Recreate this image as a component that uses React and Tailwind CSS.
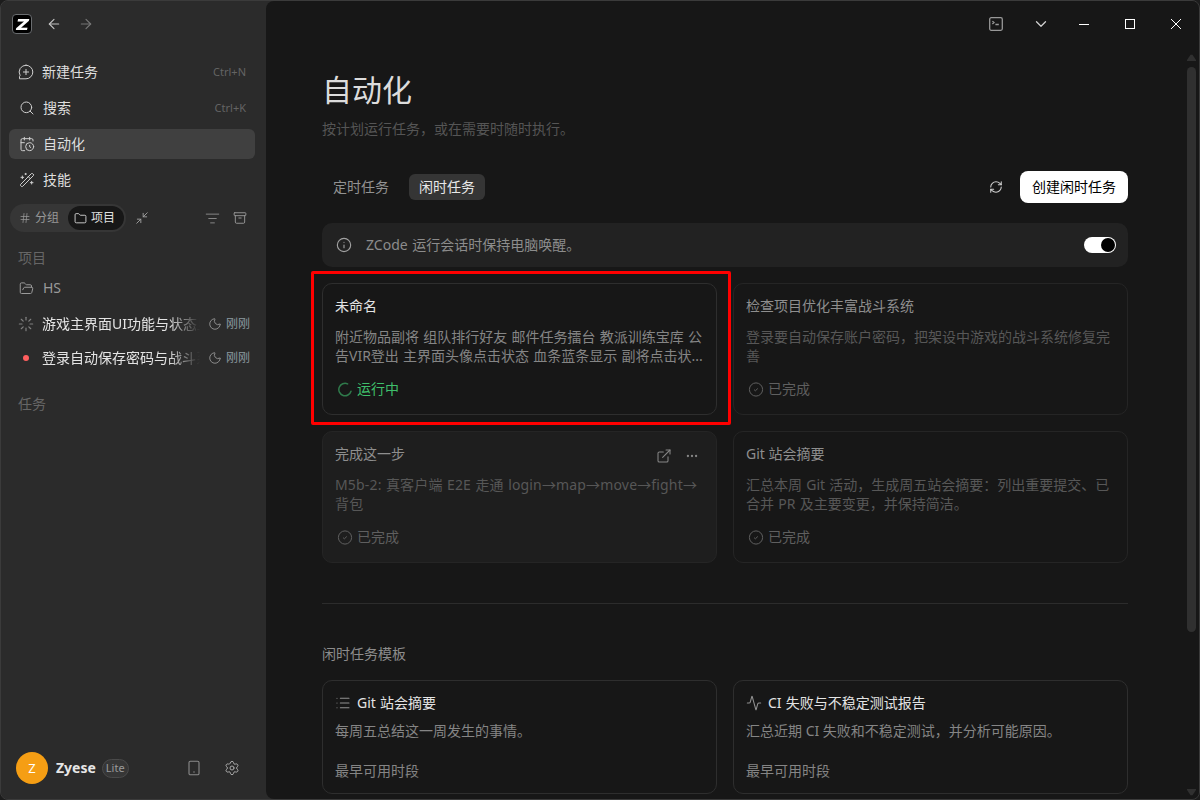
import React, { useState } from 'react';
import {
    Activity,
    Archive,
    ArrowLeft,
    ArrowRight,
    CalendarClock,
    ChevronDown,
    Ellipsis,
    ExternalLink,
    Folder,
    FolderOpen,
    Hash,
    Info,
    List,
    ListFilter,
    Loader,
    Minimize2,
    Moon,
    RefreshCw,
    Search,
    Settings,
    WandSparkles
} from 'lucide-react';

const NewChatIcon = () => (
    <svg width="16" height="16" viewBox="0 0 16 16" fill="none" stroke="currentColor" strokeWidth="1" strokeLinecap="round" strokeLinejoin="round" className="shrink-0 text-[#cfcfcf]">
        <path d="M8 1.2a6.8 6.8 0 1 1 0 13.6H1.5v-2.4l.6-1A6.8 6.8 0 0 1 8 1.2z" />
        <path d="M8 5.4v5.2M5.4 8h5.2" />
    </svg>
);

const TerminalIcon = () => (
    <svg width="14" height="14" viewBox="0 0 14 14" fill="none" stroke="currentColor" strokeWidth="1.3">
        <rect x="0.7" y="0.7" width="12.6" height="12.6" rx="1.5" />
        <path d="M3.4 4.2l1.6 1.4-1.6 1.4M6.4 7.5h3.4" />
    </svg>
);

const DoneIcon = () => (
    <svg width="16" height="16" viewBox="0 0 16 16" fill="none" stroke="currentColor" strokeWidth="1">
        <circle cx="8" cy="8.5" r="6.6" />
        <path d="M6.1 8.7l1.3 1.1 2.4-2.3" />
    </svg>
);

const RunningIcon = () => (
    <svg width="16" height="16" viewBox="0 0 16 16" fill="none" stroke="currentColor" strokeWidth="1.5" strokeLinecap="round" className="text-[#2f7a4b]">
        <path d="M14 10.2A6.2 6.2 0 1 1 10.6 2.9" />
    </svg>
);

const PhoneIcon = () => (
    <svg width="12" height="16" viewBox="0 0 12 16" fill="none" stroke="currentColor" strokeWidth="1.1">
        <rect x="1" y="1.2" width="10" height="13.6" rx="1.4" />
        <path d="M5.2 12h1.6" />
    </svg>
);

const navItems = [
    { label: '新建任务', icon: NewChatIcon, shortcut: 'Ctrl+N', pad: 'pl-[9px]' },
    { label: '搜索', icon: Search, shortcut: 'Ctrl+K', pad: 'pl-2.5' },
    { label: '自动化', icon: CalendarClock, pad: 'pl-2.5' },
    { label: '技能', icon: WandSparkles, pad: 'pl-2.5' }
];

const sessions = [
    { title: '游戏主界面UI功能与状态显', running: true },
    { title: '登录自动保存密码与战斗系', running: false }
];

const tasks = [
    {
        title: '未命名',
        text: '附近物品副将 组队排行好友 邮件任务擂台 教派训练宝库 公告VIR登出 主界面头像点击状态 血条蓝条显示 副将点击状...',
        running: true
    },
    { title: '检查项目优化丰富战斗系统', text: '登录要自动保存账户密码，把架设中游戏的战斗系统修复完善' },
    { title: '完成这一步', text: 'M5b-2: 真客户端 E2E 走通 login→map→move→fight→背包', hovered: true },
    { title: 'Git 站会摘要', text: '汇总本周 Git 活动，生成周五站会摘要：列出重要提交、已合并 PR 及主要变更，并保持简洁。' }
];

const templates = [
    { title: 'Git 站会摘要', text: '每周五总结这一周发生的事情。', icon: List },
    { title: 'CI 失败与不稳定测试报告', text: '汇总近期 CI 失败和不稳定测试，并分析可能原因。', icon: Activity }
];

const Sidebar = () => (
    <aside className="flex w-[265px] shrink-0 flex-col bg-[#2b2b2b] pl-2">
        <div className="mt-[13px] flex h-5 items-center pl-[3px]">
            <div className="flex size-5 items-center justify-center overflow-hidden rounded border border-[#6a6d70] bg-black">
                <span className="scale-x-125 font-['Inter'] text-[15px] leading-none font-black text-white italic">Z</span>
            </div>
            <ArrowLeft size={16} strokeWidth={1.7} className="ml-[14px] text-[#c4c4c4]" />
            <ArrowRight size={16} strokeWidth={1.7} className="ml-4 text-[#777777]" />
        </div>

        <nav className="mt-[23px] flex w-[246px] flex-col gap-1.5">
            {navItems.map((item) => {
                const Icon = item.icon;
                return (
                    <div
                        key={item.label}
                        className={`flex h-[30px] items-center rounded-md pr-[9px] ${item.pad} ${item.label === '自动化' ? 'bg-[#404040]' : ''}`}
                    >
                        <Icon size={16} strokeWidth={1.5} className="shrink-0 text-[#cfcfcf]" />
                        <span className="ml-2 text-[#dedede]">{item.label}</span>
                        {item.shortcut && <span className="ml-auto text-[11px] text-[#646464]">{item.shortcut}</span>}
                    </div>
                );
            })}
        </nav>

        <div className="mt-[9px] flex h-7 w-[246px] items-center pl-px">
            <div className="flex h-7 items-center rounded-full bg-[#363636] p-0.5 text-xs">
                <div className="flex h-6 items-center gap-1 pr-[9px] pl-[7px] text-[#989898]">
                    <Hash size={12} strokeWidth={1.5} />
                    <span>分组</span>
                </div>
                <div className="flex h-6 items-center gap-1 rounded-full bg-[#171717] pr-[9px] pl-1.5 text-[#e0e0e0]">
                    <Folder size={13} strokeWidth={1.6} />
                    <span>项目</span>
                </div>
            </div>
            <Minimize2 size={14} strokeWidth={1.6} className="ml-[9px] text-[#a0a0a0]" />
            <ListFilter size={15} strokeWidth={1.6} className="ml-auto text-[#858585]" />
            <Archive size={14} strokeWidth={1.6} className="mr-2 ml-[13px] text-[#9a9a9a]" />
        </div>

        <div className="mt-4 pl-[9px] text-[#666666]">项目</div>
        <div className="mt-2.5 flex h-5 items-center pl-2.5 text-[#9a9a9a]">
            <FolderOpen size={15} strokeWidth={1.6} />
            <span className="ml-[9px]">HS</span>
        </div>
        <div className="mt-[9px] w-[246px]">
            {sessions.map((session) => (
                <div key={session.title} className="flex h-[34px] items-center pl-[9px]">
                    <div className="flex size-4 items-center justify-center">
                        {session.running ? (
                            <Loader size={16} strokeWidth={1.8} className="text-[#808080]" />
                        ) : (
                            <span className="size-1.5 rounded-full bg-[#ff5f5f]" />
                        )}
                    </div>
                    <div className="ml-2 w-[158px] overflow-hidden mask-r-from-80% whitespace-nowrap text-[#e4e4e4]">{session.title}</div>
                    <Moon size={14} strokeWidth={1.6} className="ml-2 shrink-0 text-[#929292]" />
                    <span className="ml-1 shrink-0 text-xs text-[#8c9aa0]">刚刚</span>
                </div>
            ))}
        </div>
        <div className="mt-[19px] pl-[9px] text-[#666666]">任务</div>

        <div className="mt-auto mb-[15px] flex h-8 items-center pl-[7px]">
            <div className="flex size-8 items-center justify-center rounded-full bg-[#f59e14] text-[13px] text-white">Z</div>
            <span className="ml-2 font-bold text-[#e6e6e6]">Zyese</span>
            <span className="ml-1.5 flex h-[19px] items-center rounded-full border border-[#4a4a4a] bg-[#363636] px-[3px] text-[11px] text-[#9a9a9a]">Lite</span>
            <span className="ml-auto text-[#8a8a8a]"><PhoneIcon /></span>
            <Settings size={16} strokeWidth={1.5} className="mr-[26px] ml-6 text-[#a8a8a8]" />
        </div>
    </aside>
);

const WindowBar = () => (
    <header className="flex h-[46px] shrink-0 items-center justify-end pr-[17px] text-white">
        <span className="text-[#989898]"><TerminalIcon /></span>
        <ChevronDown size={18} strokeWidth={1.7} className="ml-[29px] text-[#d0d0d0]" />
        <span className="ml-[29px] h-px w-2.5 bg-white" />
        <span className="ml-9 size-2.5 border border-white" />
        <svg width="12" height="12" viewBox="0 0 12 12" stroke="currentColor" strokeWidth="1" className="ml-[35px]">
            <path d="M1 1l10 10M11 1L1 11" />
        </svg>
    </header>
);

const TaskCard = ({ task }) => {
    const tone = task.running
        ? { card: 'border-[#2e2e2e]', title: 'text-[#e4e4e4]', text: 'text-[#858585]' }
        : { card: 'border-[#252525]', title: 'text-[#8e8e8e]', text: 'text-[#575757]' };

    return (
        <div className={`h-[132px] rounded-[10px] border px-3 pt-3 ${tone.card} ${task.hovered ? 'bg-[#1e1e1e] tracking-[0.16px]' : ''}`}>
            <div className="flex h-5 items-center">
                <span className={`tracking-normal ${tone.title}`}>{task.title}</span>
                {task.hovered && (
                    <div className="mt-1 mr-[5px] ml-auto flex items-center gap-[13px] text-[#858585]">
                        <ExternalLink size={16} strokeWidth={1.6} />
                        <Ellipsis size={14} strokeWidth={2} />
                    </div>
                )}
            </div>
            <p className={`mt-[11px] line-clamp-2 h-[39px] leading-[19.25px] [word-spacing:0.6px] ${tone.text}`}>{task.text}</p>
            <div className={`mt-[13px] flex h-5 items-center gap-1 pl-0.5 tracking-normal ${task.running ? 'text-[#3fbf6b]' : 'text-[#5f5f5f]'}`}>
                {task.running ? <RunningIcon /> : <DoneIcon />}
                <span>{task.running ? '运行中' : '已完成'}</span>
            </div>
        </div>
    );
};

const TemplateCard = ({ template }) => {
    const Icon = template.icon;
    return (
        <div className="h-[114px] rounded-[10px] border border-[#2e2e2e] px-3 pt-3">
            <div className="flex h-5 items-center gap-1.5">
                <Icon size={16} strokeWidth={1.6} className="text-[#929292]" />
                <span className="text-[#e4e4e4] [word-spacing:0.5px]">{template.title}</span>
            </div>
            <p className="mt-2 text-[#858585]">{template.text}</p>
            <p className="mt-5 text-[#858585]">最早可用时段</p>
        </div>
    );
};

const App = () => {
    const [keepAwake, setKeepAwake] = useState(true);

    return (
        <div className="h-screen overflow-hidden bg-[#1c1c1c] font-['Noto_Sans','Noto_Sans_CJK_SC',sans-serif] text-sm leading-5">
            <div className="relative flex h-full overflow-hidden rounded-lg border border-[#3b3b3b] bg-[#2b2b2b]">
                <Sidebar />
                <main className="flex min-w-0 flex-1 flex-col overflow-hidden rounded-l-lg bg-[#171717]">
                    <WindowBar />
                    <div className="flex min-h-0 flex-1">
                        <div className="ml-[56px] w-[806px]">
                            <h1 className="mt-[23px] text-[30px] leading-10 text-[#dcdcdc]">自动化</h1>
                            <p className="mt-[9px] text-[#555555]">按计划运行任务，或在需要时随时执行。</p>

                            <div className="mt-8 flex h-8 items-center">
                                <span className="ml-[11px] text-[#929292]">定时任务</span>
                                <span className="ml-5 flex h-[26px] items-center rounded-md bg-[#353535] px-2.5 text-[#e8e8e8]">闲时任务</span>
                                <RefreshCw size={14} strokeWidth={1.8} className="ml-auto text-[#d0d0d0]" />
                                <button className="ml-[17px] h-8 rounded-lg bg-white px-3 text-black">创建闲时任务</button>
                            </div>

                            <div className="mt-5 flex h-11 items-center rounded-[10px] bg-[#222222] pr-3 pl-[14px]">
                                <Info size={16} strokeWidth={1.7} className="text-[#a0a0a0]" />
                                <span className="ml-[14px] text-[#8c8c8c] [word-spacing:1px]">ZCode 运行会话时保持电脑唤醒。</span>
                                <button
                                    onClick={() => setKeepAwake(!keepAwake)}
                                    className={`ml-auto flex h-4 w-8 items-center rounded-full px-px ${keepAwake ? 'justify-end bg-white' : 'justify-start bg-[#555555]'}`}
                                >
                                    <span className="size-[14px] rounded-full bg-black" />
                                </button>
                            </div>

                            <div className="mt-4 grid grid-cols-2 gap-4">
                                {tasks.map((task) => (
                                    <TaskCard key={task.title} task={task} />
                                ))}
                            </div>

                            <div className="mt-10 border-t border-[#2c2c2c]" />
                            <h2 className="mt-10 text-[#8c8c8c]">闲时任务模板</h2>
                            <div className="mt-4 grid grid-cols-2 gap-4">
                                {templates.map((template) => (
                                    <TemplateCard key={template.title} template={template} />
                                ))}
                            </div>
                        </div>

                        {/* Scrollbar */}
                        <div className="mr-[3px] ml-auto flex w-[9px] flex-col items-center pt-[7px] pb-[3px] text-[#303030]">
                            <svg width="9" height="7" viewBox="0 0 9 7" fill="currentColor"><path d="M3.5.8h2L9 6v1H0V6z" /></svg>
                            <div className="mt-[6px] h-[565px] w-[9px] rounded-full bg-[#303030]" />
                            <svg width="9" height="7" viewBox="0 0 9 7" fill="currentColor" className="mt-auto"><path d="M0 0h9v1L5.5 6.2h-2L0 1z" /></svg>
                        </div>
                    </div>
                </main>

                {/* Highlight around the running task */}
                <div className="pointer-events-none absolute top-[270px] left-[310px] h-[154px] w-[420px] rounded-[2px] border-3 border-[#ff0000]" />
            </div>
        </div>
    );
};

export default App;
